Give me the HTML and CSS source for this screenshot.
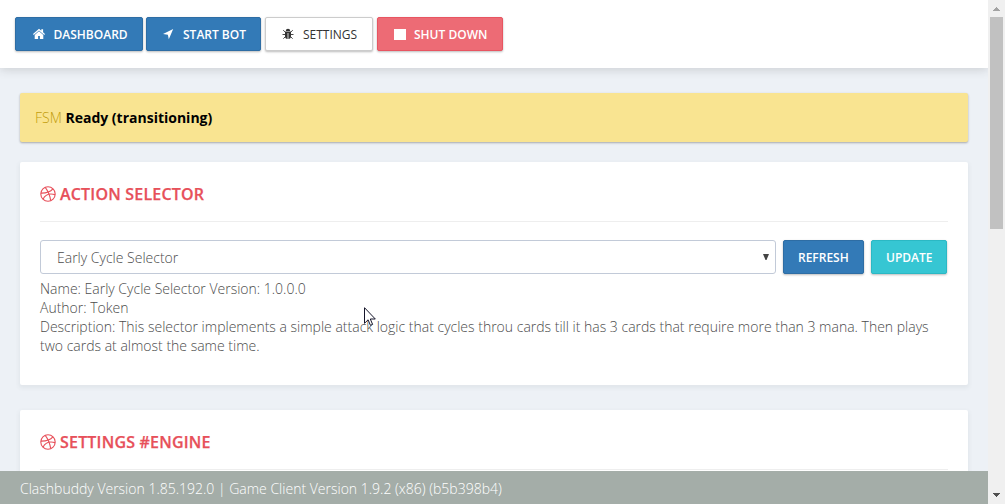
FILE: index.html
```html
<!DOCTYPE html>
<html lang="en">
<head>
<meta charset="utf-8">
<title>Clashbuddy</title>
<link rel="stylesheet" href="styles.css">
</head>
<body>
<svg class="defs" aria-hidden="true">
  <symbol id="dribbble" viewBox="0 0 16 16"><g fill="none" stroke="currentColor" stroke-width="1.1"><circle cx="8" cy="8" r="7.2"/><path d="M5.2 1.4C7.7 4.5 9.8 9 10.7 14.6M.9 7.1c4.5.1 9.2-.8 12-4.2M3 13.2c2.1-4.4 6.8-6 12.1-4.6"/></g></symbol>
</svg>
<div class="app">
  <div class="view">
    <header class="topbar">
      <button class="btn blue dashboard"><svg class="icon" viewBox="0 0 12 12"><path fill="currentColor" d="M6 .8 0 6l.7.9L6 2.400l5.300 4.500.7-.9-1.900-1.700V1.200H8.300v1.600zM6 3.300 1.700 6.900V11h3.400V8h1.800v3h3.400V6.900z"/></svg><span>DASHBOARD</span></button>
      <button class="btn blue start"><svg class="icon" viewBox="0 0 12 12"><path fill="currentColor" d="M11.200 1 6.800 11.300 5.900 6.700 1 6z"/></svg><span>START BOT</span></button>
      <button class="btn white settings"><svg class="icon" viewBox="0 0 12 12"><path fill="currentColor" d="M3.800 3a2.200 2.200 0 0 1 4.400 0zM3 3.600h6v4.700c0 1.700-1 2.700-2.600 2.700V5h-.8v6C4 11 3 10 3 8.300z"/><path fill="none" stroke="currentColor" stroke-width=".9" d="M1.200 2.200 3.300 4.200M10.800 2.200 8.700 4.200M.5 6.500h3M8.500 6.500h3M1.400 10.700 3.300 8.700M10.600 10.700 8.700 8.700"/></svg><span>SETTINGS</span></button>
      <button class="btn red shutdown"><i class="stop"></i><span>SHUT DOWN</span></button>
    </header>
    <main class="content">
      <div class="status"><span class="fsm">FSM</span> <b>Ready (transitioning)</b></div>
      <section class="card selector">
        <h2><svg><use href="#dribbble"/></svg><span>ACTION SELECTOR</span></h2>
        <div class="controls">
          <div class="select"><span>Early Cycle Selector</span><svg class="caret" viewBox="0 0 6 6"><path d="M0 0h6L3.500 6h-1z"/></svg></div>
          <button class="btn blue refresh"><span>REFRESH</span></button>
          <button class="btn teal update"><span>UPDATE</span></button>
        </div>
        <div class="info">Name: Early Cycle Selector Version: 1.0.0.0<br>Author: Token<br>Description: This selector implements a simple attack logic that cycles throu cards till it has 3 cards that require more than 3 mana. Then plays<br>two cards at almost the same time.</div>
      </section>
      <section class="card engine">
        <h2><svg><use href="#dribbble"/></svg><span>SETTINGS #ENGINE</span></h2>
      </section>
    </main>
    <footer class="footer"><span>Clashbuddy Version 1.85.192.0 | Game Client Version 1.9.2 (x86) (b5b398b4)</span></footer>
  </div>
  <div class="scrollbar">
    <svg viewBox="0 0 17 17"><path fill="#a3a3a3" d="M8 7h1v1h1v1h1v1h1v1H5v-1h1V9h1V8h1z"/></svg>
    <div class="thumb"></div>
    <svg viewBox="0 0 17 17"><path fill="#505050" d="M5 6h7v1h-1v1h-1v1H9v1H8V9H7V8H6V7H5z"/></svg>
  </div>
</div>
<svg class="cursor" viewBox="0 0 12 20"><path fill="#fff" stroke="#15152a" d="M.5.7v15.600l3.600-3.500 2.300 5.500 2.200-.9-2.300-5.400h5z"/></svg>
</body>
</html>
```

FILE: styles.css
```css
* { box-sizing: border-box; }
body {
  margin: 0;
  overflow: hidden;
  background: #edf1f6;
  font: 300 14px/19px "Open Sans", sans-serif;
  color: #4c4c4c;
}
.defs { display: none; }
.app { display: flex; width: 1005px; height: 504px; }
.view { display: flex; flex-direction: column; width: 988px; height: 504px; overflow: hidden; }
.topbar {
  position: relative;
  display: flex;
  flex: none;
  align-items: flex-start;
  height: 68px;
  padding: 17px 15px;
  gap: 3px;
  background: #fff;
  box-shadow: 0 1px 10px rgba(50, 50, 50, .2);
}
.btn {
  display: flex;
  flex: none;
  align-items: center;
  height: 34px;
  padding: 0 0 0 16px;
  border: 1px solid;
  border-radius: 2px;
  font: 600 12px/17px "Open Sans", sans-serif;
  color: #fff;
  white-space: nowrap;
  box-shadow: 0 1px 3px rgba(0, 0, 0, .1), 0 1px 2px rgba(0, 0, 0, .18);
}
.blue { background: #337ab7; border-color: #2e6da4; }
.white { background: #fff; border-color: #ccc; color: #333; font-weight: 400; }
.red { background: #ed6b75; border-color: #e85561; }
.teal { background: #36c6d3; border-color: #2bb8c4; }
.dashboard { width: 128px; padding-left: 17px; }
.start { width: 115px; padding-left: 15px; }
.settings { width: 108px; margin-left: 1px; }
.shutdown { width: 126px; margin-left: 1px; }
.icon { width: 12px; height: 12px; margin-right: 9px; }
.dashboard .icon { margin-right: 8.500px; }
.stop { width: 12px; height: 11px; margin-right: 8px; background: #fff; }
.content { flex: 1; min-height: 0; padding: 25px 20px 0; overflow: hidden; }
.status {
  height: 49px;
  margin-bottom: 20px;
  padding: 15px 15px 0;
  border-radius: 2px;
  background: #f9e491;
  color: #c29d0b;
  box-shadow: 0 1px 3px rgba(0, 0, 0, .1), 0 1px 2px rgba(0, 0, 0, .22);
}
.status b { color: #000; font-weight: 700; }
.card { padding: 12px 20px 0; border-radius: 2px; background: #fff; box-shadow: 0 2px 4px 1px rgba(70, 90, 90, .07); }
.selector { height: 223px; margin-bottom: 25px; }
.engine { height: 220px; }
h2 {
  display: flex;
  align-items: center;
  height: 48px;
  margin: 0 0 18px;
  padding-bottom: 8px;
  border-bottom: 1px solid #eee;
  color: #e7505a;
  font: 600 16px/22px "Open Sans", sans-serif;
  letter-spacing: .2px;
  -webkit-text-stroke: .25px #e7505a;
}
h2 svg { width: 16px; height: 16px; margin-right: 4px; }
.controls { display: flex; height: 34px; gap: 7px; }
.select {
  display: flex;
  flex: 1;
  align-items: center;
  justify-content: space-between;
  padding: 0 6px 0 16px;
  border: 1px solid #c2cad8;
  border-radius: 3px;
}
.caret { width: 6px; height: 6px; fill: #444; }
.controls .btn { padding-left: 14px; }
.refresh { width: 81px; }
.update { width: 76px; margin-right: 1px; }
.info { margin-top: 5px; white-space: nowrap; }
.footer { flex: none; height: 33px; padding: 8px 20px 0; background: #a4ada8; color: #fff; }
.scrollbar { display: flex; flex-direction: column; width: 17px; background: #f0f0f0; }
.scrollbar svg { display: block; width: 17px; height: 17px; }
.scrollbar svg:last-child { margin-top: auto; }
.thumb { height: 212px; margin: 0 2px; background: #c1c1c1; }
.cursor { position: absolute; left: 364px; top: 307px; width: 12px; height: 20px; }
```
